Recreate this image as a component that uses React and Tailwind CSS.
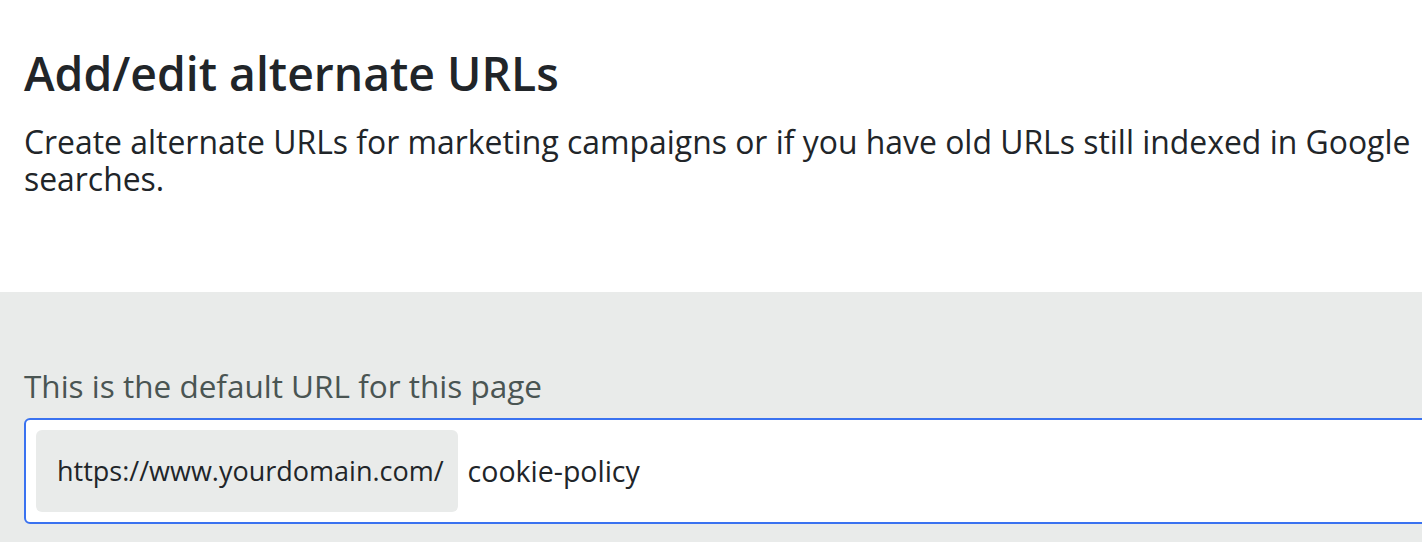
export default function App() {
  return (
    <div className="w-full h-[542px] overflow-hidden bg-white" style={{ fontFamily: "'Open Sans', sans-serif" }}>
      <div className="w-[1460px]">
        <div className="px-6 pt-[46px] h-[292px]">
          <h1 className="text-[46.3px] leading-[56px] font-semibold text-[#212529]">Add/edit alternate URLs</h1>
          <p className="mt-[21px] text-[31.9px] leading-[37px] text-[#212529]">
            Create alternate URLs for marketing campaigns or if you have old URLs still indexed in Google searches.
          </p>
        </div>
        <div className="bg-[#e9ebea] px-6 pt-[76px] pb-10">
          <div className="text-[31.5px] leading-[36px] text-[#4a5553] mb-[14px]">This is the default URL for this page</div>
          <div className="flex items-center border-2 border-[#3a72f0] rounded-md bg-white p-[10px]">
            <div className="h-[82px] flex items-center pl-[21px] pr-[14px] bg-[#e9ebea] rounded-md text-[27px] text-[#212529]">
              https://www.yourdomain.com/
            </div>
            <div className="ml-[10px] text-[28.5px] text-[#212529]">cookie-policy</div>
          </div>
        </div>
      </div>
    </div>
  );
}
